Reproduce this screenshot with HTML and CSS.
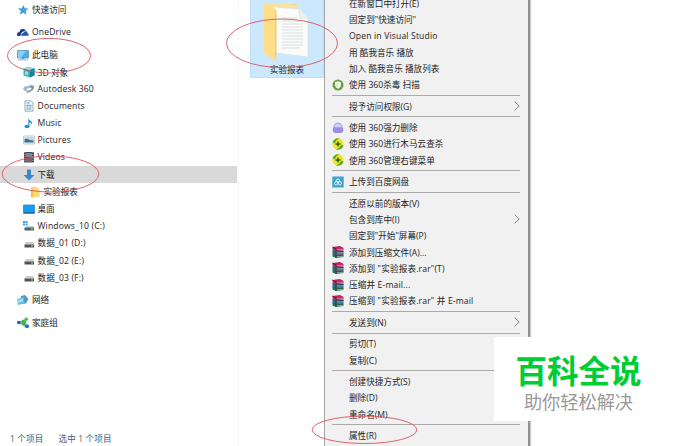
FILE: index.html
```html
<!DOCTYPE html>
<html lang="zh-CN">
<head>
  <meta charset="UTF-8">
  <meta name="viewport" content="width=device-width, initial-scale=1.0">
  <title>实验报表</title>
  <link rel="stylesheet" href="styles.css">
</head>
<body>
  <!-- Shared icons -->
  <svg class="defs" width="0" height="0">
    <symbol id="drive" viewBox="0 0 12 12">
      <path d="M3 5h7l1.500 2.500h-10z" fill="#c9cccc"/>
      <path d="M1.500 7.500h9.500v3H1.500z" fill="#4c5453"/>
      <path d="M8 9h2" stroke="#a5d6ba"/>
    </symbol>
    <symbol id="rar" viewBox="0 0 12 12">
      <path d="M.5 1L8 0l3.500 2v2.500L4 5 .5 3.500z" fill="#b8235f"/>
      <path d="M.5 4.500l3.500 1 7.500-.5v3L4 8.500l-3.500-1z" fill="#1d7397"/>
      <path d="M.5 8L4 9l7.500-.5V11L4 12l-3.500-1.500z" fill="#1b7a58"/>
      <path d="M4.500 3.300h7M4.500 6.900h7M4.500 10.400h7" stroke="#d9c5cb" stroke-width=".6"/>
      <path d="M.5 1L4 3v9M.5 4.200L4 5.300h7.500M.5 7.800L4 8.800h7.500" stroke="#3c2632" stroke-width=".8" fill="none"/>
    </symbol>
    <symbol id="safe" viewBox="0 0 12 12">
      <circle cx="6" cy="6" r="5.700" fill="#f1e52b"/>
      <path d="M.5 4.500A5.700 5.700 0 0 1 8 .6Q4 1.500 3 5zM11.500 7.500A5.700 5.700 0 0 1 4 11.400Q8 10.500 9 7z" fill="#51a51f"/>
      <path d="M6 3.500v5M3.500 6h5" stroke="#24611d" stroke-width="1.400"/>
    </symbol>
    <symbol id="arrow" viewBox="0 0 6 10">
      <path d="M.7.700L5.200 5 .7 9.300" fill="none" stroke="#777" stroke-width=".9"/>
    </symbol>
  </svg>

  <div class="window">
    <!-- Navigation pane -->
    <div class="sidebar">
      <ul class="tree">
        <li class="root"><svg class="icon" viewBox="0 0 12 12"><path d="M6.500 1l1.300 3.300 3.700.2-2.800 2.400.7 3.900-3.200-2-3.400 1.700 1.100-3.600L1 4.500l3.800-.3z" fill="#42a0df"/></svg>快速访问</li>
        <li class="root latin"><svg class="icon" viewBox="0 0 12 12"><path d="M0 9q-.3-3 2.500-3Q3 2.500 6 3q2-.2 3 2l-4 1-1.500 4H1q-1 0-1-1z" fill="#153f91"/><path d="M4 10q-.5-3 2-3 .5-2.500 3-2 2 .2 1.800 2.300Q12 7.500 12 9q0 1-1 1z" fill="#2356a7" stroke="#fff" stroke-width=".5"/></svg>OneDrive</li>
        <li class="root"><svg class="icon" viewBox="0 0 12 12"><path d="M.5 1.500h11v7.500H.5z" fill="#43b2ec" stroke="#557e99" stroke-width=".6"/><path d="M1 2h8L4 8.700H1z" fill="#83d1f7"/><path d="M4.500 9h3v1h-3zM1 10.500h10v.8H1z" fill="#5d9dc5"/></svg>此电脑</li>
        <li><svg class="icon" viewBox="0 0 12 12"><path d="M.5 2.500L5 1l6.500 1.200v7L7 11.500.5 9.500z" fill="#35aebe"/><path d="M.5 2.500L5 1l6.500 1.200L7 4z" fill="#8ce3ea"/><path d="M7 4l4.500-1.800v7L7 11.500z" fill="#15849b"/><path d="M2 5l3 .7v3.500L2 8.500z" fill="#9bdfe4"/></svg>3D 对象</li>
        <li class="latin"><svg class="icon" viewBox="0 0 12 12"><path d="M6 2.500c6-1.500 7 3 2 6-3 2-6 1-4-.2 4-.8 6-3.300 3-3.800z" fill="#8299a8"/><path d="M7 3.200C2 2-.5 4.500.5 6.500 1.500 8.500 5 9 7 7.500 3 7.500 2.500 5.500 7 5z" fill="#a5bac3"/></svg>Autodesk 360</li>
        <li class="latin"><svg class="icon" viewBox="0 0 12 12"><path d="M2 .8h6l2 2v8.400H2z" fill="#f5fbfe" stroke="#7e9aa9" stroke-width=".8"/><path d="M3.500 3h3M3.500 5.300h5M3.500 7h2M6.500 7h2M3.500 9h5" stroke="#4c91bd" stroke-width=".9"/></svg>Documents</li>
        <li class="latin"><svg class="icon" viewBox="0 0 12 12"><ellipse cx="4" cy="9.500" rx="2.500" ry="1.800" fill="#2490d1"/><path d="M5.300 9.500V1q.5 2 3 3.300Q10 6 8.500 8q.5-2-2-2.700v4.200z" fill="#2898da"/></svg>Music</li>
        <li class="latin"><svg class="icon" viewBox="0 0 12 12"><path d="M.5 2h11v8H.5z" fill="#f5f8fa" stroke="#aab4bb" stroke-width=".7"/><path d="M1.500 3h9v5.500h-9z" fill="#b3dbee"/><path d="M1.500 5q3-1 5 1l4 .5v2h-9z" fill="#457184"/></svg>Pictures</li>
        <li class="latin"><svg class="icon" viewBox="0 0 12 12"><path d="M1 1h10v10.500H1z" fill="#474753"/><path d="M3 2h6v4H3z" fill="#81849c"/><path d="M3 7h6v4H3z" fill="#75646f"/><path d="M2 1v11M10 1v11" stroke="#ddd" stroke-width=".8" stroke-dasharray="1 1"/></svg>Videos</li>
        <li class="active"><svg class="icon" viewBox="0 0 12 12"><path d="M4 .5h4V6h3.500L6 11.500.5 6H4z" fill="#3988ce"/></svg>下载</li>
        <li class="child"><svg class="icon" viewBox="0 0 12 12"><path d="M2 .8h5l1 1.400h2.500v9H2z" fill="#fbd978"/><path d="M2 2l2 1v8.200H2z" fill="#eec354"/></svg>实验报表</li>
        <li><svg class="icon" viewBox="0 0 12 12"><path d="M.5 2h11v8.500H.5z" fill="#159df0" stroke="#217bb6" stroke-width=".7"/><path d="M1 9.500h10" stroke="#0864a3" stroke-width=".8"/></svg>桌面</li>
        <li class="latin"><svg class="icon" viewBox="0 0 12 12"><path d="M0 1h2v2H0zM2.500 1h2v2h-2zM0 3.500h2v2H0zM2.500 3.500h2v2h-2z" fill="#30a9dc"/><path d="M3 6h7l1.500 2H2z" fill="#c9cccc"/><path d="M1.500 7.500H11v3H1.500z" fill="#4c6462"/><path d="M8 9h2" stroke="#a5d6ba"/></svg>Windows_10 (C:)</li>
        <li class="latin"><svg class="icon"><use href="#drive"/></svg>数据_01 (D:)</li>
        <li class="latin"><svg class="icon"><use href="#drive"/></svg>数据_02 (E:)</li>
        <li class="latin"><svg class="icon"><use href="#drive"/></svg>数据_03 (F:)</li>
        <li class="root"><svg class="icon" viewBox="0 0 12 12"><path d="M4 2l4-1 3.500 4L9 9.500 4 10z" fill="#5797b8"/><path d="M0 5l7-2v6.500L1 11z" fill="#5cbdec"/><path d="M1 6l5-1.500v3L1 9z" fill="#a2dcf7"/></svg>网络</li>
        <li class="root"><svg class="icon" viewBox="0 0 12 12"><path d="M2 5.500L9 2M2 5.500L9.500 10M6 5l3 4" stroke="#5ab784" stroke-width="1.200"/><circle cx="1.800" cy="5.500" r="1.800" fill="#1c5da6"/><circle cx="6.800" cy="5.500" r="2.500" fill="#45b34b"/><circle cx="9.300" cy="2.300" r="1.800" fill="#60b755"/><circle cx="10" cy="9.300" r="2" fill="#2371b7"/></svg>家庭组</li>
      </ul>
      <div class="statusbar"><span>1 个项目</span><span>选中 1 个项目</span></div>
    </div>

    <!-- Selected folder -->
    <div class="files">
      <div class="folder">
        <svg class="folder-icon" viewBox="0 0 50 62">
          <path d="M3 4h33v48H15z" fill="#f3d78c"/>
          <path d="M6 3h23l1 2h6v45H8z" fill="#f9e1a0"/>
          <path d="M12 7l25 2 9 9v39l-32-4z" fill="#fbfbfa" stroke="#dde1e3" stroke-width=".7"/>
          <path d="M37 9l1 9h8" fill="#eef1f2" stroke="#d5d9dc" stroke-width=".6"/>
          <path d="M20 18h16M20 21h18M20 24h21M20 27h21M20 30h21M20 33h21M20 36h21M20 39h21M20 42h21M20 45h21M20 48h18" stroke="#d3d8db" stroke-width=".8"/>
          <path d="M2 3l11 6v52L2 53z" fill="#ffde88"/>
          <path d="M13 9l1.500 2v43L13 61z" fill="#eecb7c"/>
        </svg>
        <span>实验报表</span>
      </div>
    </div>

    <!-- Context menu -->
    <div class="menu">
      <div class="item">在新窗口中打开(E)</div>
      <div class="item">固定到"快速访问"</div>
      <div class="item latin">Open in Visual Studio</div>
      <div class="item">用 酷我音乐 播放</div>
      <div class="item">加入 酷我音乐 播放列表</div>
      <div class="item"><svg class="icon" viewBox="0 0 12 12"><circle cx="6" cy="6" r="5.500" fill="#6a9f48"/><path d="M3 3.300l3-1 3 1v2.500Q9 8.500 6 9.700 3 8.500 3 5.800z" fill="#f4ffe9"/><path d="M6 4v4.500Q4.500 7.500 4.500 6V4.500z" fill="#c8e5ae"/></svg>使用 360杀毒 扫描</div>
      <div class="line"></div>
      <div class="item">授予访问权限(G)<svg class="arrow"><use href="#arrow"/></svg></div>
      <div class="line"></div>
      <div class="item"><svg class="icon" viewBox="0 0 12 12"><circle cx="6" cy="5" r="4.500" fill="#b1a8f0"/><path d="M1 5.500h10l.3 3.500q-1 2-2.300 2H3q-1.500 0-2.300-2z" fill="#9a90e3"/><path d="M3 3q3-2 6 0v2H3z" fill="#d7d0ff"/></svg>使用 360强力删除</div>
      <div class="item"><svg class="icon"><use href="#safe"/></svg>使用 360进行木马云查杀</div>
      <div class="item"><svg class="icon"><use href="#safe"/></svg>使用 360管理右键菜单</div>
      <div class="line"></div>
      <div class="item"><svg class="icon" viewBox="0 0 12 12"><path d="M.3.500h11.400v11H.3z" fill="#3da4d0"/><g fill="none" stroke="#e5f8ff" stroke-width="1"><circle cx="6" cy="4.500" r="1.600"/><circle cx="4.200" cy="7.300" r="1.600"/><circle cx="7.800" cy="7.300" r="1.600"/></g></svg>上传到百度网盘</div>
      <div class="line"></div>
      <div class="item">还原以前的版本(V)</div>
      <div class="item">包含到库中(I)<svg class="arrow"><use href="#arrow"/></svg></div>
      <div class="item">固定到"开始"屏幕(P)</div>
      <div class="item"><svg class="icon"><use href="#rar"/></svg>添加到压缩文件(A)...</div>
      <div class="item latin"><svg class="icon"><use href="#rar"/></svg>添加到 "实验报表.rar"(T)</div>
      <div class="item latin"><svg class="icon"><use href="#rar"/></svg>压缩并 E-mail...</div>
      <div class="item latin"><svg class="icon"><use href="#rar"/></svg>压缩到 "实验报表.rar" 并 E-mail</div>
      <div class="line"></div>
      <div class="item">发送到(N)<svg class="arrow"><use href="#arrow"/></svg></div>
      <div class="line"></div>
      <div class="item">剪切(T)</div>
      <div class="item">复制(C)</div>
      <div class="line"></div>
      <div class="item">创建快捷方式(S)</div>
      <div class="item">删除(D)</div>
      <div class="item">重命名(M)</div>
      <div class="line"></div>
      <div class="item">属性(R)</div>
    </div>
  </div>

  <!-- Red markers -->
  <svg class="marks" viewBox="0 0 692 446">
    <ellipse cx="49" cy="55.700" rx="41.500" ry="17.300"/>
    <ellipse cx="50.500" cy="174" rx="48.300" ry="18"/>
    <ellipse cx="282" cy="43.300" rx="55.500" ry="24.300"/>
    <ellipse cx="364.500" cy="429.800" rx="52.300" ry="13.700"/>
  </svg>

  <div class="badge">
    <div class="badge-title">百科全说</div>
    <div class="badge-text">助你轻松解决</div>
  </div>
</body>
</html>
```

FILE: styles.css
```css
/* General Styles */
* {
  box-sizing: border-box;
}

body {
  margin: 0;
  height: 446px;
  overflow: hidden;
  position: relative;
  background: #fff;
  color: #222;
  font-family: "Open Sans", "Noto Sans CJK SC", sans-serif;
  font-size: 8.6px;
  white-space: nowrap;
}

.defs {
  position: absolute;
}

.window {
  display: flex;
  height: 446px;
}

.icon {
  width: 12px;
  height: 12px;
  flex: none;
}

.latin {
  letter-spacing: 0.15px;
}

/* Navigation pane */
.sidebar {
  width: 239px;
  height: 446px;
  display: flex;
  flex-direction: column;
  justify-content: space-between;
  border-right: 1px solid #f8f9fb;
}

.tree {
  list-style: none;
  margin: 0;
  padding: 0;
}

.tree li {
  display: flex;
  align-items: center;
  gap: 3px;
  height: 17.1px;
  width: 237px;
  padding-left: 22.5px;
}

.tree .root {
  padding-left: 17px;
  margin-top: 5.6px;
}

.tree .root:first-child {
  margin-top: 1px;
}

.tree .child {
  padding-left: 28.5px;
}

.tree .active {
  background: #d9d9d9;
}

.statusbar {
  display: flex;
  gap: 15px;
  height: 14px;
  padding-left: 10px;
  line-height: 14px;
  color: #4c5a70;
  letter-spacing: 0.1px;
}

/* Folder */
.files {
  width: 85px;
  padding-left: 11px;
}

.folder {
  height: 78px;
  display: flex;
  flex-direction: column;
  align-items: center;
  background: #cce8ff;
  border: 1px solid #bfe0fb;
  border-top: 0;
  line-height: 12px;
}

.folder-icon {
  width: 50px;
  height: 62px;
  margin-bottom: 2px;
}

/* Context menu */
.menu {
  width: 206px;
  height: 446px;
  padding: 0 8px 0 7px;
  overflow: hidden;
  background: #f1f1f1;
  border-left: 1px solid #a5a5a5;
  border-right: 2px solid #929292;
  box-shadow: 1px 0 1px #ccc;
}

.item {
  display: flex;
  align-items: center;
  height: 16.3px;
  padding-left: 17px;
}

.item:first-child {
  margin-top: -5px;
}

.item .icon {
  margin-left: -17px;
  margin-right: 5px;
}

.arrow {
  width: 6px;
  height: 10px;
  margin-left: auto;
}

.line {
  height: 5.2px;
  padding-top: 2px;
}

.line::before {
  content: "";
  display: block;
  height: 1px;
  background: #aaa;
}

/* Red markers */
.marks {
  position: absolute;
  left: 0;
  top: 0;
  width: 692px;
  height: 446px;
  fill: none;
  stroke: #d9535c;
  stroke-width: 0.9;
}

/* Badge */
.badge {
  position: absolute;
  left: 494px;
  top: 337px;
  width: 176px;
  height: 84px;
  padding: 15px 7px 0 0;
  background: #fff;
  font-family: "Noto Sans CJK SC", sans-serif;
  text-align: center;
}

.badge-title {
  font-size: 31.5px;
  line-height: 34px;
  font-weight: bold;
  color: #0c3;
}

.badge-text {
  margin-top: 3px;
  font-size: 18.2px;
  line-height: 24px;
  color: #999;
}
```
